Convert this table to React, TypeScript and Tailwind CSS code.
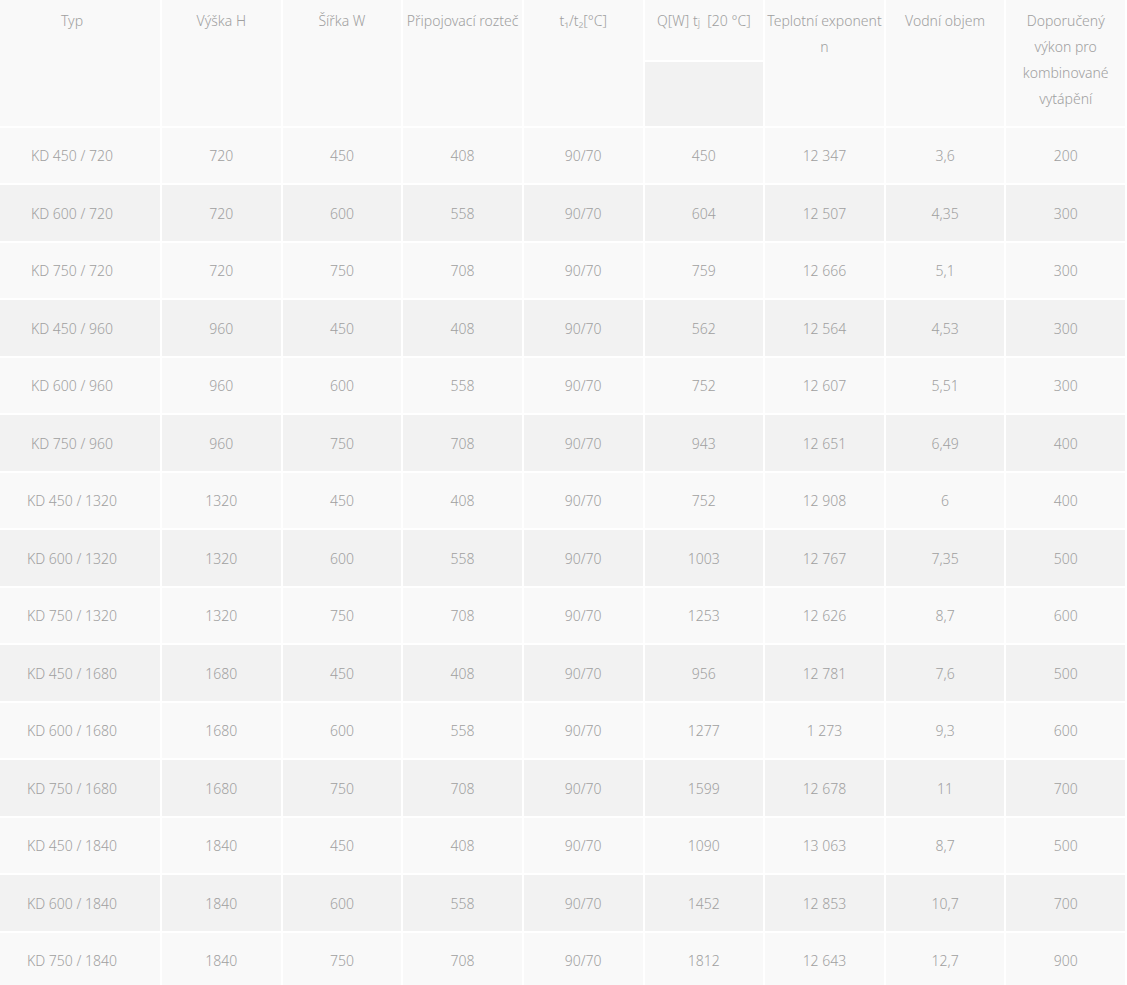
import React from 'react';

// Tabulka rozměrů a výkonů
const rows = [
  ['KD 450 / 720', '720', '450', '408', '90/70', '450', '12 347', '3,6', '200'],
  ['KD 600 / 720', '720', '600', '558', '90/70', '604', '12 507', '4,35', '300'],
  ['KD 750 / 720', '720', '750', '708', '90/70', '759', '12 666', '5,1', '300'],
  ['KD 450 / 960', '960', '450', '408', '90/70', '562', '12 564', '4,53', '300'],
  ['KD 600 / 960', '960', '600', '558', '90/70', '752', '12 607', '5,51', '300'],
  ['KD 750 / 960', '960', '750', '708', '90/70', '943', '12 651', '6,49', '400'],
  ['KD 450 / 1320', '1320', '450', '408', '90/70', '752', '12 908', '6', '400'],
  ['KD 600 / 1320', '1320', '600', '558', '90/70', '1003', '12 767', '7,35', '500'],
  ['KD 750 / 1320', '1320', '750', '708', '90/70', '1253', '12 626', '8,7', '600'],
  ['KD 450 / 1680', '1680', '450', '408', '90/70', '956', '12 781', '7,6', '500'],
  ['KD 600 / 1680', '1680', '600', '558', '90/70', '1277', '1 273', '9,3', '600'],
  ['KD 750 / 1680', '1680', '750', '708', '90/70', '1599', '12 678', '11', '700'],
  ['KD 450 / 1840', '1840', '450', '408', '90/70', '1090', '13 063', '8,7', '500'],
  ['KD 600 / 1840', '1840', '600', '558', '90/70', '1452', '12 853', '10,7', '700'],
  ['KD 750 / 1840', '1840', '750', '708', '90/70', '1812', '12 643', '12,7', '900'],
];

const th = 'bg-[#f9f9f9] align-top text-center font-light pt-[8px] px-0 leading-[26px]';

const App = () => {
  return (
    <div className="w-full overflow-hidden bg-white">
      <table
        className="table-fixed border-separate border-spacing-[2px] -ml-[18px] -mt-[2px] w-[1145px] text-[14px] font-light text-[#a0a0a0]"
        style={{ fontFamily: '"Noto Sans", "Open Sans", sans-serif' }}
      >
        <colgroup>
          <col className="w-[176px]" />
          <col />
          <col />
          <col />
          <col />
          <col />
          <col />
          <col />
          <col />
        </colgroup>
        <thead>
          <tr className="h-[60px]">
            <th rowSpan={2} className={th}>Typ</th>
            <th rowSpan={2} className={th}>Výška H</th>
            <th rowSpan={2} className={th}>Šířka W</th>
            <th rowSpan={2} className={`${th} whitespace-nowrap`}>Připojovací rozteč</th>
            <th rowSpan={2} className={th}>t₁/t₂[°C]</th>
            <th className={th}>Q[W] t<span className="text-[10px]">j</span>&nbsp; [20 °C]</th>
            <th rowSpan={2} className={`${th} whitespace-nowrap`}>
              Teplotní exponent
              <br />n
            </th>
            <th rowSpan={2} className={th}>Vodní objem</th>
            <th rowSpan={2} className={th}>
              Doporučený
              <br />
              výkon pro
              <br />
              kombinované
              <br />
              vytápění
            </th>
          </tr>
          <tr className="h-[64px]">
            <th className="bg-[#f2f2f2]"></th>
          </tr>
        </thead>
        <tbody>
          {rows.map((r, i) => (
            <tr key={i} className={i % 2 === 0 ? 'h-[55px]' : 'h-[56px]'}>
              {r.map((c, j) => (
                <td
                  key={j}
                  className={`${i % 2 === 0 ? 'bg-[#f9f9f9]' : 'bg-[#f2f2f2]'} text-center align-middle`}
                >
                  {c}
                </td>
              ))}
            </tr>
          ))}
        </tbody>
      </table>
    </div>
  );
};

export default App;
